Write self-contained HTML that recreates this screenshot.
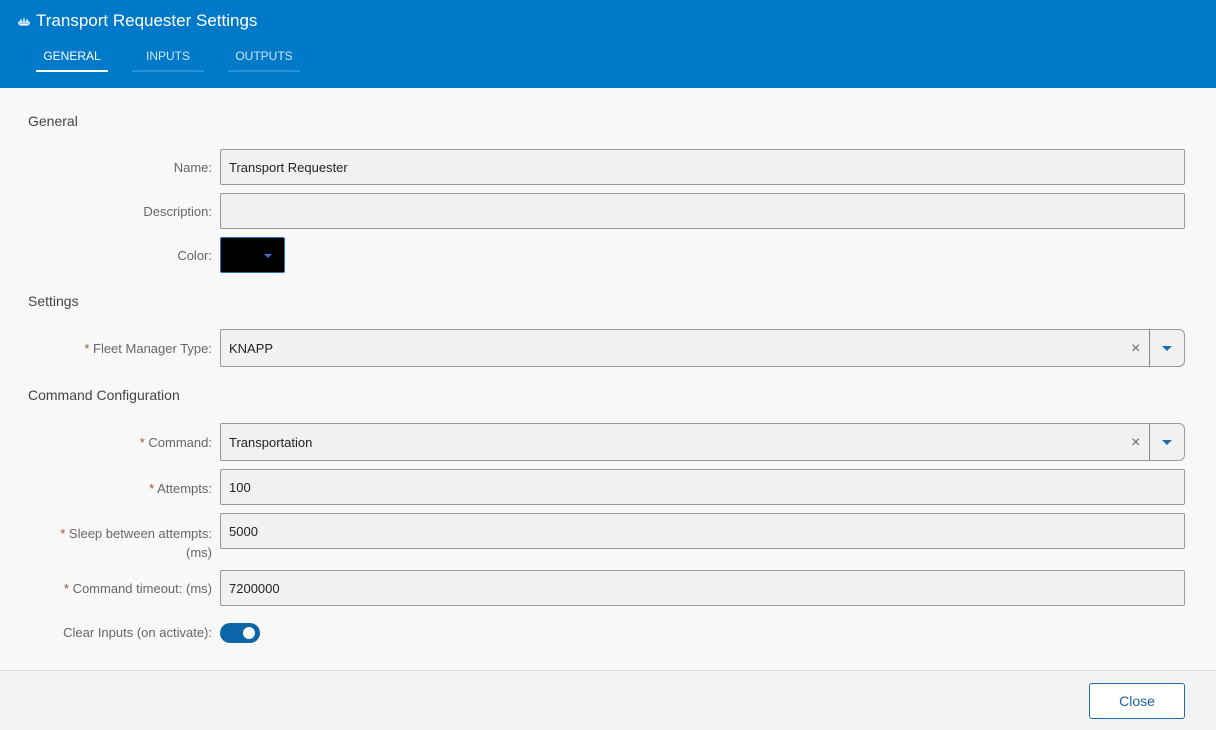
<!DOCTYPE html><html><head><style>
body{margin:0;width:1216px;height:729px;background:#f8f8f8;font-family:"Liberation Sans",sans-serif;position:relative;overflow:hidden}
.hd{position:absolute;left:0;top:0;width:1216px;height:88px;background:#0079c9}
.t{position:absolute;left:36px;top:11px;color:#fff;font-size:17px}
.tab{position:absolute;top:49px;font-size:12px;color:#cfe4f5;text-align:center;width:72px}
.tab:after{content:"";position:absolute;left:0;right:0;top:21px;height:2px;background:#2a8fd6}
.tab.a{color:#fff}.tab.a:after{background:#fff}
.sec{position:absolute;left:28px;font-size:14px;color:#444}
.lb{position:absolute;right:1004px;font-size:13px;color:#666;text-align:right;white-space:nowrap}
.lb b{color:#a0522d;font-weight:normal}
.in{position:absolute;left:220px;background:#f1f1f1;border:1px solid #999;border-radius:2px;font-size:13px;color:#222;box-sizing:border-box;width:965px;padding-left:8px}
.ft{position:absolute;left:0;top:670px;width:1216px;height:59px;background:#f3f3f3;border-top:1px solid #ddd}
</style></head><body>
<div class="hd">
<div class="t"><svg style="position:absolute;left:-18px;top:4px" width="12" height="12" viewBox="0 0 12 12" fill="none" stroke="#fff" stroke-width="1.2"><path d="M1 7h10v2H1z M3 7V4 M6 7V3 M9 7V4 M2 10h8"/></svg>Transport Requester Settings</div>
<div class="tab a" style="left:36px">GENERAL</div>
<div class="tab" style="left:132px">INPUTS</div>
<div class="tab" style="left:228px">OUTPUTS</div>
</div>
<div class="sec" style="top:113px">General</div>
<div class="lb" style="top:160px">Name:</div>
<div class="in" style="top:149px;height:36px;line-height:35px">Transport Requester</div>
<div class="lb" style="top:204px">Description:</div>
<div class="in" style="top:193px;height:36px"></div>
<div class="lb" style="top:248px">Color:</div>
<div style="position:absolute;left:220px;top:237px;width:65px;height:36px;box-sizing:border-box;background:#000;border:1px solid #2a6fb8;border-radius:2px"><div style="position:absolute;left:43px;top:16px;border:4px solid transparent;border-top:4px solid #3b6fd0;border-bottom:0"></div></div>
<div class="sec" style="top:293px">Settings</div>
<div class="lb" style="top:341px"><b>*</b> Fleet Manager Type:</div>
<div class="in" style="top:329px;height:38px;line-height:37px;border-radius:2px 6px 6px 2px">KNAPP<span style="position:absolute;left:910px;color:#666;font-size:16px">×</span><span style="position:absolute;left:928px;top:0;bottom:0;border-left:1px solid #888"></span><span style="position:absolute;left:941px;top:16px;border:5px solid transparent;border-top:5px solid #1a6bb0;border-bottom:0"></span></div>
<div class="sec" style="top:387px">Command Configuration</div>
<div class="lb" style="top:435px"><b>*</b> Command:</div>
<div class="in" style="top:423px;height:38px;line-height:37px;border-radius:2px 6px 6px 2px">Transportation<span style="position:absolute;left:910px;color:#666;font-size:16px">×</span><span style="position:absolute;left:928px;top:0;bottom:0;border-left:1px solid #888"></span><span style="position:absolute;left:941px;top:16px;border:5px solid transparent;border-top:5px solid #1a6bb0;border-bottom:0"></span></div>
<div class="lb" style="top:481px"><b>*</b> Attempts:</div>
<div class="in" style="top:469px;height:36px;line-height:35px">100</div>
<div class="lb" style="top:524px;line-height:19px"><b>*</b> Sleep between attempts:<br>(ms)</div>
<div class="in" style="top:513px;height:36px;line-height:35px">5000</div>
<div class="lb" style="top:581px"><b>*</b> Command timeout: (ms)</div>
<div class="in" style="top:570px;height:36px;line-height:35px">7200000</div>
<div class="lb" style="top:625px">Clear Inputs (on activate):</div>
<div style="position:absolute;left:220px;top:623px;width:40px;height:20px;border-radius:10px;background:#0a66a8"><div style="position:absolute;left:23px;top:4px;width:12px;height:12px;border-radius:6px;background:#fff"></div></div>
<div class="ft"></div>
<div style="position:absolute;left:1089px;top:683px;width:96px;height:36px;box-sizing:border-box;border:1px solid #1a6bb0;border-radius:3px;background:#fff;color:#1a5f99;font-size:14px;text-align:center;line-height:34px">Close</div>
</body></html>
